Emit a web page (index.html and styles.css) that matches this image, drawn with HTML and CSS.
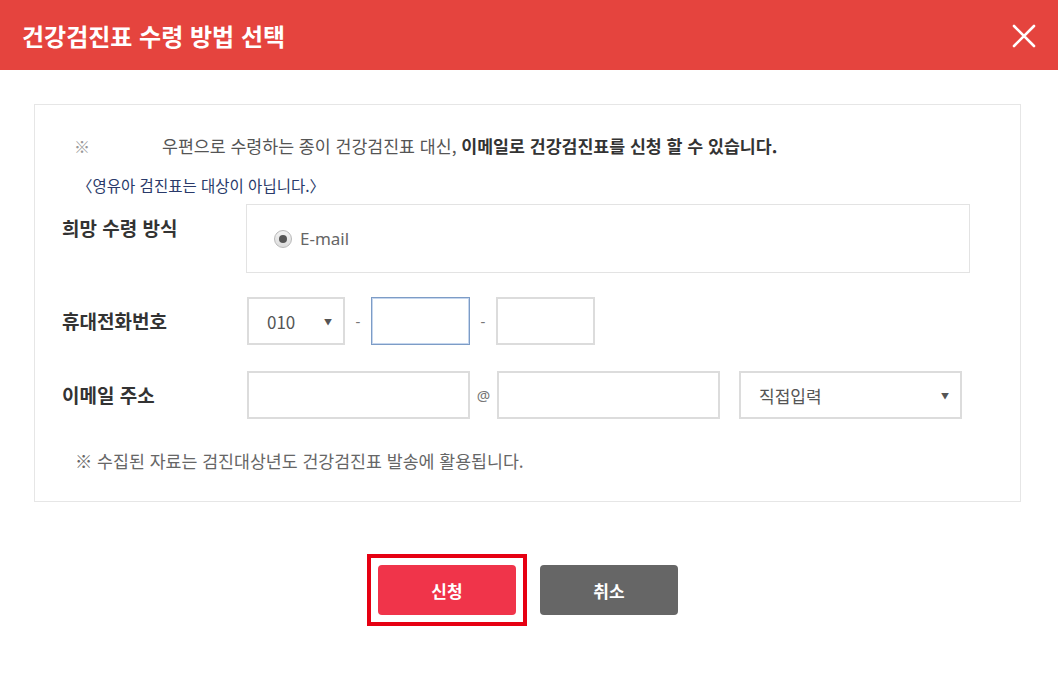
FILE: index.html
```html
<!DOCTYPE html>
<html lang="ko">
<head>
<meta charset="utf-8">
<link rel="stylesheet" href="styles.css">
</head>
<body>
<div class="modal">
  <header class="modal-head">
    <h1 class="modal-title">건강검진표 수령 방법 선택</h1>
    <svg class="close-icon" width="24" height="24" viewBox="0 0 24 24"><path d="M2 2 L22 22 M22 2 L2 22" stroke="#fff" stroke-width="2.6" fill="none" stroke-linecap="round"/></svg>
  </header>
  <div class="modal-body">
    <div class="form-box">
      <p class="intro"><span class="mark">※</span><span class="intro-text">우편으로 수령하는 종이 건강검진표 대신, <b>이메일로 건강검진표를 신청 할 수 있습니다.</b></span></p>
      <p class="sub-note">〈영유아 검진표는 대상이 아닙니다.〉</p>
      <div class="row row-top">
        <div class="label label-top">희망 수령 방식</div>
        <div class="radio-box">
          <span class="radio"><span class="radio-dot"></span></span>
          <span class="radio-label">E-mail</span>
        </div>
      </div>
      <div class="row">
        <div class="label">휴대전화번호</div>
        <div class="controls">
          <div class="field select select-sm"><span>010</span><span class="arrow">▼</span></div>
          <span class="sep">-</span>
          <div class="field input-sm focused"></div>
          <span class="sep">-</span>
          <div class="field input-sm"></div>
        </div>
      </div>
      <div class="row row-email">
        <div class="label">이메일 주소</div>
        <div class="controls">
          <div class="field input-lg"></div>
          <span class="sep at">@</span>
          <div class="field input-lg"></div>
          <div class="field select select-lg"><span>직접입력</span><span class="arrow">▼</span></div>
        </div>
      </div>
      <p class="foot-note">※ 수집된 자료는 검진대상년도 건강검진표 발송에 활용됩니다.</p>
    </div>
    <div class="actions">
      <div class="highlight"><button class="btn btn-primary">신청</button></div>
      <button class="btn btn-cancel">취소</button>
    </div>
  </div>
</div>
</body>
</html>
```

FILE: styles.css
```css
* { box-sizing: border-box; }
html, body { margin: 0; padding: 0; background: #fff; }
body {
  font-family: "Noto Sans", "Noto Sans CJK KR", sans-serif;
  color: #555;
  width: 1058px;
  height: 689px;
  overflow: hidden;
}
.modal-head {
  height: 70px;
  background: #e5443e;
  display: flex;
  align-items: center;
  justify-content: space-between;
  padding: 0 22px 0 22px;
}
.modal-title {
  margin: 0;
  font-family: "Noto Sans CJK KR", sans-serif;
  font-size: 24px;
  font-weight: 700;
  color: #fff;
  letter-spacing: 0;
}
.close-icon { display: block; margin-top: 2px; }
.modal-body { padding: 34px 37px 0 34px; }
.form-box {
  border: 1px solid #e6e6e6;
  padding: 29px 50px 28px 27px;
}
.intro {
  margin: 0;
  font-size: 17.3px;
  line-height: 24px;
  padding-left: 12px;
  display: flex;
}
.mark { color: #999; width: 88px; font-family: "Noto Sans CJK KR", sans-serif; font-size: 16px; }
.intro-text { color: #555; font-family: "Noto Sans CJK KR", sans-serif; }
.intro-text b { color: #333; font-weight: 700; }
.sub-note {
  margin: 17px 0 0 15px;
  font-family: "Noto Sans CJK KR", sans-serif;
  font-size: 15.5px;
  line-height: 20px;
  color: #2a3a6a;
}
.row { display: flex; align-items: center; margin-top: 24px; }
.row-top { align-items: flex-start; margin-top: 9px; }
.row-email { margin-top: 26px; }
.label {
  width: 185px;
  flex: none;
  font-family: "Noto Sans CJK KR", sans-serif;
  font-size: 19px;
  font-weight: 700;
  color: #333;
  line-height: 24px;
}
.label-top { padding-top: 12px; }
.radio-box {
  flex: 1;
  margin-left: -1px;
  height: 69px;
  border: 1px solid #e3e3e3;
  display: flex;
  align-items: center;
  padding-left: 27px;
}
.radio {
  width: 18px;
  height: 18px;
  border-radius: 50%;
  border: 1px solid #b9b9b9;
  background: linear-gradient(#f2f2f2, #dcdcdc);
  display: flex;
  align-items: center;
  justify-content: center;
}
.radio-dot { width: 8px; height: 8px; border-radius: 50%; background: #555; }
.radio-label { margin-left: 8px; font-size: 17px; color: #666; }
.controls { display: flex; align-items: center; }
.field {
  height: 48px;
  border: 2px solid #dcdcdc;
  background: #fff;
}
.select {
  display: flex;
  align-items: center;
  justify-content: space-between;
  padding: 0 11px 0 18px;
  font-size: 17px;
  color: #555;
}
.select span:first-child { font-family: "Noto Sans CJK KR", sans-serif; }
.arrow { font-size: 8px; color: #555; }
.select-sm { width: 98px; }
.select-lg { width: 223px; margin-left: 19px; }
.input-sm { width: 99px; }
.input-lg { width: 223px; }
.focused {
  border: 1px solid #7d9cc6;
  box-shadow: inset 0 0 0 1px #c5d6ee;
}
.sep { width: 26px; text-align: center; color: #777; font-size: 15px; }
.at { width: 27px; font-size: 15px; color: #777; }
.foot-note {
  margin: 30px 0 0 13px;
  font-family: "Noto Sans CJK KR", sans-serif;
  font-size: 17.3px;
  line-height: 24px;
  color: #666;
}
.actions {
  display: flex;
  justify-content: center;
  align-items: center;
  gap: 24px;
  margin-top: 63px;
  padding-left: 1px;
}
.highlight {
  border: 4px solid #e60012;
  padding: 7px;
  margin: -11px;
}
.btn {
  display: block;
  width: 138px;
  height: 50px;
  border: 0;
  border-radius: 4px;
  color: #fff;
  font-family: "Noto Sans CJK KR", sans-serif;
  font-size: 17px;
  font-weight: 700;
}
.btn-primary { background: #f0344a; }
.btn-cancel { background: #666; }
```
